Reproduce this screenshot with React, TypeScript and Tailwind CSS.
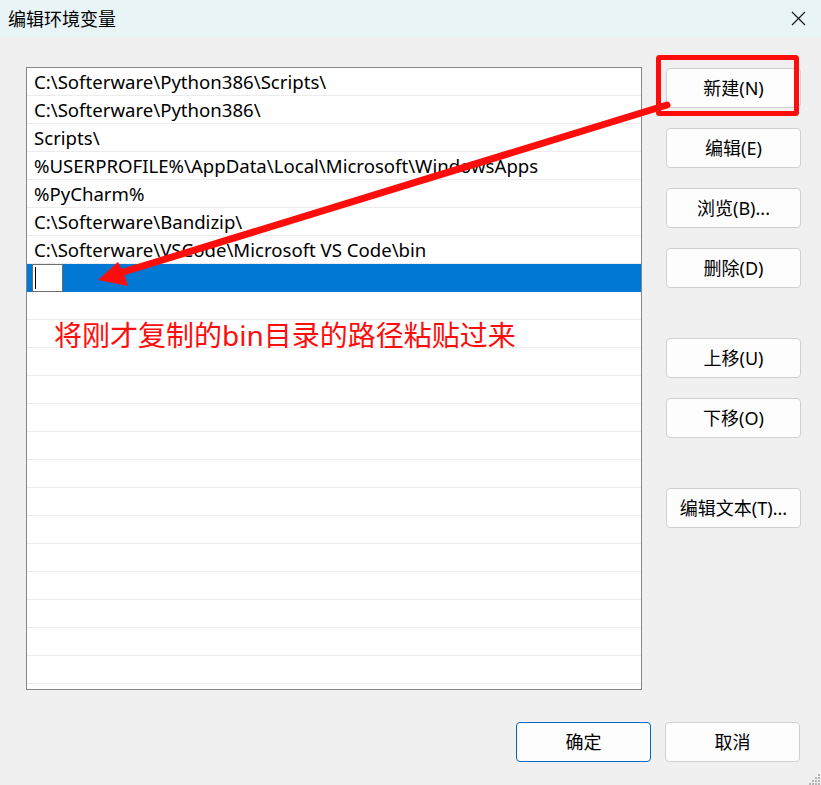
import { useState } from "react";

const paths = [
  "C:\\Softerware\\Python386\\Scripts\\",
  "C:\\Softerware\\Python386\\",
  "Scripts\\",
  "%USERPROFILE%\\AppData\\Local\\Microsoft\\WindowsApps",
  "%PyCharm%",
  "C:\\Softerware\\Bandizip\\",
  "C:\\Softerware\\VSCode\\Microsoft VS Code\\bin",
];

const EMPTY_ROWS = 15;

function DlgButton({ label, primary = false }: { label: string; primary?: boolean }) {
  return (
    <button
      className={
        "h-[40px] w-[135px] rounded-[4px] border bg-[#fdfdfd] text-[18px] leading-none text-black " +
        (primary ? "border-[#0067c0]" : "border-[#d0d0d0]")
      }
    >
      {label}
    </button>
  );
}

export default function App() {
  const [selected] = useState(7);

  return (
    <div
      className="relative h-[785px] w-[821px] overflow-hidden bg-[#f0f0f0]"
      style={{ fontFamily: '"Noto Sans", "Noto Sans CJK SC", sans-serif' }}
    >
      {/* title bar */}
      <div className="flex h-[37px] items-center justify-between bg-[#e8f4f6] pl-[8px] pr-[15px]">
        <span className="text-[18px] leading-none text-black">编辑环境变量</span>
        <svg width="15" height="15" viewBox="0 0 15 15">
          <path d="M1 1 L14 14 M14 1 L1 14" stroke="#1a1a1a" strokeWidth="1.2" />
        </svg>
      </div>

      <div className="flex pl-[26px] pt-[30px]">
        {/* path list */}
        <div className="h-[623px] w-[616px] overflow-hidden border border-[#868689] bg-white">
          {paths.map((p) => (
            <div
              key={p}
              className="flex h-[28px] items-center border-b border-[#ececec] pl-[7px] text-[18.6px] leading-none text-black"
            >
              <span className="mt-[1px] whitespace-nowrap">{p}</span>
            </div>
          ))}
          <div className="flex h-[28px] bg-[#0078d4] pl-[5px]">
            {selected === 7 && (
              <div className="flex h-[28px] w-[31px] items-center border border-[#6e6e6e] bg-white pl-[2px]">
                <div className="h-[22px] w-[1px] bg-black" />
              </div>
            )}
          </div>
          {Array.from({ length: EMPTY_ROWS }).map((_, i) => (
            <div key={i} className="h-[28px] border-b border-[#ececec]" />
          ))}
        </div>

        {/* side buttons */}
        <div className="ml-[24px] mt-[1px] flex flex-col">
          <div className="flex flex-col gap-[20px]">
            <DlgButton label="新建(N)" />
            <DlgButton label="编辑(E)" />
            <DlgButton label="浏览(B)..." />
            <DlgButton label="删除(D)" />
          </div>
          <div className="mt-[50px] flex flex-col gap-[20px]">
            <DlgButton label="上移(U)" />
            <DlgButton label="下移(O)" />
          </div>
          <div className="mt-[50px]">
            <DlgButton label="编辑文本(T)..." />
          </div>
        </div>
      </div>

      {/* bottom buttons */}
      <div className="mt-[32px] flex justify-end gap-[14px] pr-[21px]">
        <DlgButton label="确定" primary />
        <DlgButton label="取消" />
      </div>

      {/* resize grip */}
      <svg className="absolute bottom-0 right-0" width="12" height="12" viewBox="0 0 12 12">
        {[
          [9, 1],
          [6, 4],
          [9, 4],
          [3, 7],
          [6, 7],
          [9, 7],
          [0, 10],
          [3, 10],
          [6, 10],
          [9, 10],
        ].map(([x, y]) => (
          <rect key={`${x}-${y}`} x={x} y={y} width="2" height="2" fill="#b4b4b4" />
        ))}
      </svg>

      {/* annotation overlay */}
      <span className="absolute left-[54px] top-[318px] whitespace-nowrap text-[28px] leading-[34px] text-[#ff0d0d]">
        将刚才复制的bin目录的路径粘贴过来
      </span>
      <svg className="pointer-events-none absolute left-0 top-0" width="821" height="785" viewBox="0 0 821 785">
        <rect x="658.5" y="57.5" width="138" height="56" fill="none" stroke="#ff0d0d" strokeWidth="5" rx="1" />
        <line x1="667" y1="105" x2="120" y2="273" stroke="#ff0d0d" strokeWidth="7" strokeLinecap="round" />
        <polygon points="98,280 118,262 123,271 128,286" fill="#ff0d0d" />
      </svg>
    </div>
  );
}
